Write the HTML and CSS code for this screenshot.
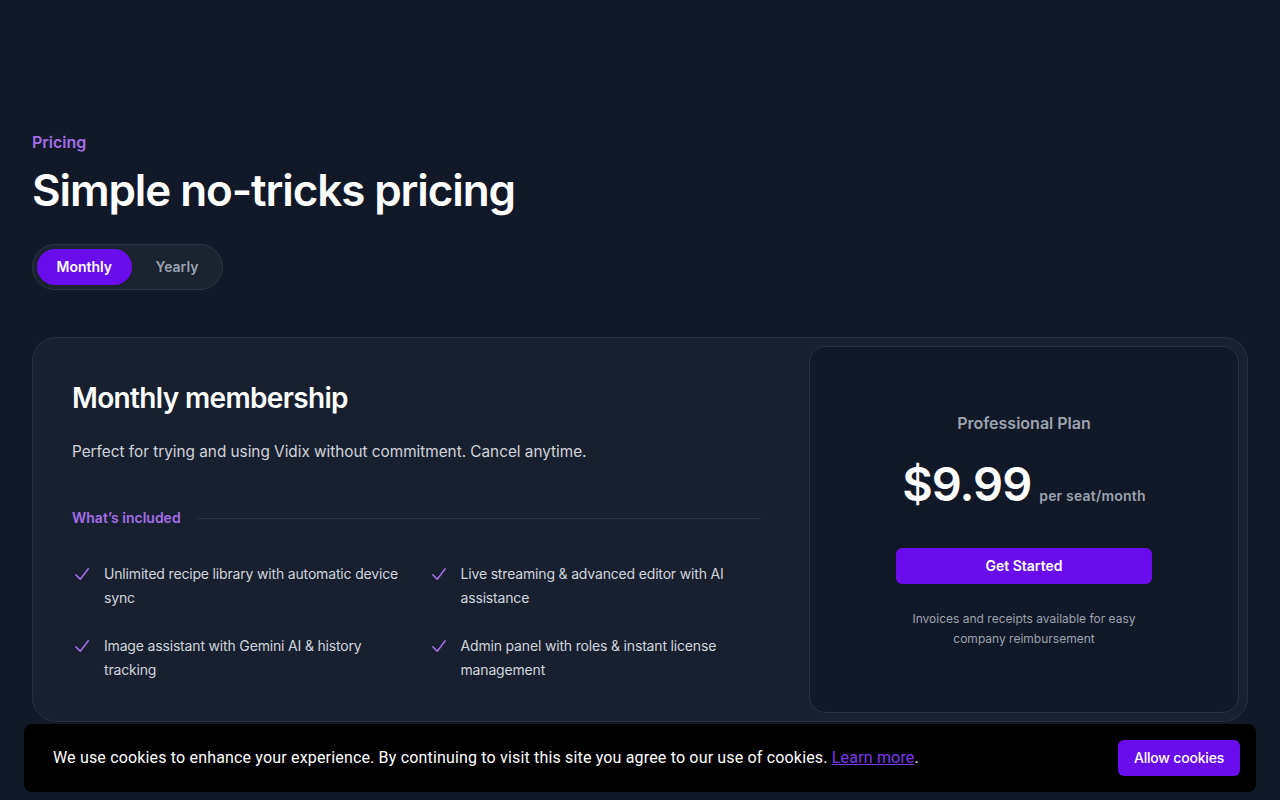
FILE: index.html
```html
<!DOCTYPE html>
<html lang="en">
<head>
<meta charset="utf-8">
<title>Pricing</title>
<link rel="stylesheet" href="styles.css">
</head>
<body>
<main class="page">
  <header class="intro">
    <p class="eyebrow">Pricing</p>
    <h1 class="title">Simple no-tricks pricing</h1>
    <div class="toggle">
      <button class="toggle-btn active">Monthly</button>
      <button class="toggle-btn">Yearly</button>
    </div>
  </header>

  <section class="card">
    <div class="card-main">
      <h2 class="card-title">Monthly membership</h2>
      <p class="card-desc">Perfect for trying and using Vidix without commitment. Cancel anytime.</p>
      <div class="included">
        <h3 class="included-label">What’s included</h3>
        <div class="included-line"></div>
      </div>
      <ul class="features">
        <li class="feature">
          <svg class="check" viewBox="0 0 20 20" fill="currentColor" aria-hidden="true"><path fill-rule="evenodd" d="M16.704 4.153a.75.75 0 01.143 1.052l-8 10.5a.75.75 0 01-1.127.075l-4.5-4.5a.75.75 0 011.06-1.06l3.894 3.893 7.48-9.817a.75.75 0 011.05-.143z" clip-rule="evenodd"/></svg>
          <span>Unlimited recipe library with automatic device sync</span>
        </li>
        <li class="feature">
          <svg class="check" viewBox="0 0 20 20" fill="currentColor" aria-hidden="true"><path fill-rule="evenodd" d="M16.704 4.153a.75.75 0 01.143 1.052l-8 10.5a.75.75 0 01-1.127.075l-4.5-4.5a.75.75 0 011.06-1.06l3.894 3.893 7.48-9.817a.75.75 0 011.05-.143z" clip-rule="evenodd"/></svg>
          <span>Live streaming &amp; advanced editor with AI assistance</span>
        </li>
        <li class="feature">
          <svg class="check" viewBox="0 0 20 20" fill="currentColor" aria-hidden="true"><path fill-rule="evenodd" d="M16.704 4.153a.75.75 0 01.143 1.052l-8 10.5a.75.75 0 01-1.127.075l-4.5-4.5a.75.75 0 011.06-1.06l3.894 3.893 7.48-9.817a.75.75 0 011.05-.143z" clip-rule="evenodd"/></svg>
          <span>Image assistant with Gemini AI &amp; history tracking</span>
        </li>
        <li class="feature">
          <svg class="check" viewBox="0 0 20 20" fill="currentColor" aria-hidden="true"><path fill-rule="evenodd" d="M16.704 4.153a.75.75 0 01.143 1.052l-8 10.5a.75.75 0 01-1.127.075l-4.5-4.5a.75.75 0 011.06-1.06l3.894 3.893 7.48-9.817a.75.75 0 011.05-.143z" clip-rule="evenodd"/></svg>
          <span>Admin panel with roles &amp; instant license management</span>
        </li>
      </ul>
    </div>

    <div class="plan">
      <div class="plan-inner">
        <p class="plan-name">Professional Plan</p>
        <p class="price"><span class="amount">$9.99</span><span class="per">per seat/month</span></p>
        <a class="cta" href="#">Get Started</a>
        <p class="note">Invoices and receipts available for easy company reimbursement</p>
      </div>
    </div>
  </section>
</main>

<div class="cookie">
  <p class="cookie-text">We use cookies to enhance your experience. By continuing to visit this site you agree to our use of cookies. <a href="#" class="cookie-link">Learn more</a>.</p>
  <button class="cookie-btn">Allow cookies</button>
</div>
</body>
</html>
```

FILE: styles.css
```css
* { box-sizing: border-box; }

html, body {
  margin: 0;
  padding: 0;
}

body {
  background: #111827;
  color: #fff;
  font-family: Inter, "Noto Sans", sans-serif;
  -webkit-font-smoothing: antialiased;
  min-height: 800px;
}

.page {
  padding: 130px 32px 80px;
}

.intro { margin: 0; }

.eyebrow {
  margin: 0;
  font-size: 16px;
  line-height: 24px;
  font-weight: 600;
  color: #a46ee8;
}

.title {
  margin: 10px 0 0;
  font-size: 44px;
  line-height: 52px;
  font-weight: 600;
  letter-spacing: -1.1px;
  color: #fff;
}

.toggle {
  display: inline-flex;
  margin-top: 28px;
  padding: 4px;
  border-radius: 999px;
  background: #1b2230;
  border: 1px solid #2c3442;
  gap: 4px;
}

.toggle-btn {
  font-family: Inter, sans-serif;
  font-size: 14px;
  font-weight: 600;
  line-height: 20px;
  padding: 8px 20px;
  border: none;
  border-radius: 999px;
  background: transparent;
  color: #9ca3af;
  cursor: pointer;
}

.toggle-btn.active {
  background: #6a0ded;
  color: #fff;
  padding: 8px 19.5px;
}

.card {
  margin-top: 47px;
  display: flex;
  border: 1px solid #283040;
  border-radius: 24px;
  background: #182030;
  padding: 8px;
}

.card-main {
  flex: 1;
  padding: 34px 48px 31px 31px;
}

.card-title {
  margin: 0;
  font-size: 28px;
  line-height: 36px;
  font-weight: 600;
  letter-spacing: -0.65px;
  color: #fff;
}

.card-desc {
  margin: 22px 0 0;
  font-size: 15.3px;
  line-height: 28px;
  color: #d1d5db;
}

.included {
  display: flex;
  align-items: center;
  gap: 16px;
  margin-top: 42px;
}

.included-label {
  margin: 0;
  flex: none;
  font-size: 14px;
  line-height: 20px;
  font-weight: 600;
  color: #a46ee8;
}

.included-line {
  flex: 1;
  height: 1px;
  background: #2a3344;
}

.features {
  list-style: none;
  margin: 34px 0 0;
  padding: 0;
  display: grid;
  grid-template-columns: 1fr 1fr;
  column-gap: 24px;
  row-gap: 24px;
  font-size: 14px;
  line-height: 24px;
  letter-spacing: -0.17px;
  color: #d1d5db;
}

.feature {
  display: flex;
  gap: 12px;
}

.check {
  flex: none;
  width: 20px;
  height: 24px;
  color: #a46ee8;
}

.plan {
  width: 430px;
  flex: none;
  display: flex;
}

.plan-inner {
  flex: 1;
  background: #111827;
  border: 1px solid #283040;
  border-radius: 16px;
  display: flex;
  flex-direction: column;
  align-items: center;
  justify-content: center;
  text-align: center;
  padding: 40px 86px;
}

.plan-name {
  margin: 0;
  font-size: 16px;
  line-height: 24px;
  font-weight: 600;
  color: #9ca3af;
}

.price {
  margin: 23px 0 0;
  display: flex;
  align-items: baseline;
  justify-content: center;
  gap: 8px;
}

.amount {
  font-size: 47px;
  line-height: 52px;
  font-weight: 600;
  letter-spacing: -1px;
  color: #fff;
}

.per {
  font-size: 14px;
  line-height: 20px;
  font-weight: 600;
  letter-spacing: 0.2px;
  color: #9ca3af;
}

.cta {
  display: block;
  width: 100%;
  margin-top: 38px;
  padding: 8px 12px;
  border-radius: 6px;
  background: #6a0ded;
  color: #fff;
  font-size: 14px;
  line-height: 20px;
  font-weight: 600;
  text-decoration: none;
}

.note {
  margin: 25px 0 0;
  font-size: 12px;
  line-height: 20px;
  color: #9ca3af;
}

.cookie {
  position: fixed;
  left: 24px;
  right: 24px;
  bottom: 8px;
  height: 68px;
  background: #000;
  border-radius: 8px;
  display: flex;
  align-items: center;
  justify-content: space-between;
  padding: 0 16px 0 29px;
}

.cookie-text {
  margin: 0;
  font-family: Roboto, "Noto Sans", sans-serif;
  font-size: 16px;
  line-height: 24px;
  letter-spacing: 0.17px;
  color: #fff;
}

.cookie-link {
  color: #7c3aed;
  text-decoration: underline;
}

.cookie-btn {
  font-family: Inter, sans-serif;
  font-size: 14px;
  font-weight: 500;
  line-height: 20px;
  letter-spacing: -0.2px;
  padding: 8px 16px;
  border: none;
  border-radius: 6px;
  background: #6a0ded;
  color: #fff;
  height: 36px;
}
```
